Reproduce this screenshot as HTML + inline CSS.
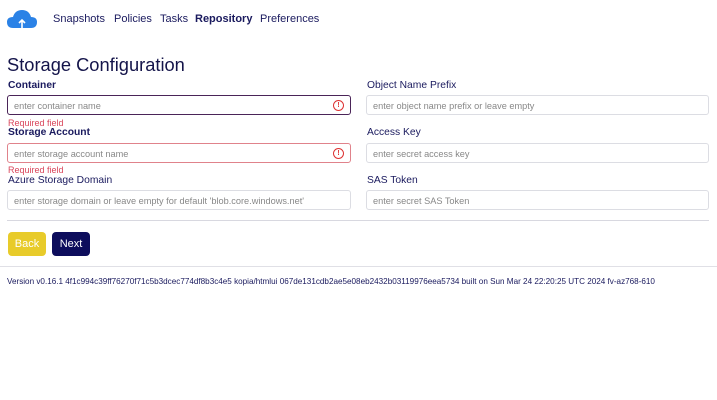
<!DOCTYPE html>
<html><head><style>
body{margin:0;width:717px;height:400px;background:#fff;font-family:"Liberation Sans",sans-serif;color:#1a1a5e;position:relative;overflow:hidden}
.a{position:absolute;white-space:nowrap}
.nav{font-size:11px;top:13px;color:#1a1a5e}
.lbl{font-size:10.3px;color:#1a1a5e}
.b{font-weight:bold}
.in{position:absolute;height:20px;border:1px solid #dcdde3;border-radius:3px;font-size:9.2px;color:#888;line-height:20px;padding-left:6px;box-sizing:border-box}
.err{border-color:#e0828b}
.req{font-size:9px;color:#d9455a}
.ic{position:absolute;right:6px;top:4px;width:9px;height:9px;border:1.2px solid #d33;border-radius:50%;font-size:7px;line-height:9px;text-align:center;color:#d33;font-weight:bold}
</style></head><body>
<svg class="a" style="left:7px;top:10px" width="30" height="19" viewBox="0 0 30 19"><path d="M6 18 Q0 18 0 12 Q0 7 6 7 Q8 0 15 0 Q22 0 24 7 Q30 7 30 12 Q30 18 24 18Z" fill="#2b82e6"/><path d="M15 18V10M12 13l3-3 3 3" stroke="#fff" stroke-width="1.6" fill="none"/></svg>
<div class="a nav" style="left:53px">Snapshots</div>
<div class="a nav" style="left:114px">Policies</div>
<div class="a nav" style="left:160px">Tasks</div>
<div class="a nav b" style="left:195px">Repository</div>
<div class="a nav" style="left:260px">Preferences</div>
<div class="a" style="left:7px;top:54px;font-size:18.3px;color:#14144a">Storage Configuration</div>
<div class="a lbl b" style="left:8px;top:80px">Container</div>
<div class="in err" style="left:7px;top:95px;width:344px;border:1.5px solid #4a2458">enter container name<span class="ic">!</span></div>
<div class="a req" style="left:8px;top:118px">Required field</div>
<div class="a lbl b" style="left:8px;top:127px">Storage Account</div>
<div class="in err" style="left:7px;top:143px;width:344px">enter storage account name<span class="ic">!</span></div>
<div class="a req" style="left:8px;top:165px">Required field</div>
<div class="a lbl" style="left:8px;top:175px">Azure Storage Domain</div>
<div class="in" style="left:7px;top:190px;width:344px">enter storage domain or leave empty for default 'blob.core.windows.net'</div>
<div class="a lbl" style="left:367px;top:80px">Object Name Prefix</div>
<div class="in" style="left:366px;top:95px;width:343px">enter object name prefix or leave empty</div>
<div class="a lbl" style="left:367px;top:127px">Access Key</div>
<div class="in" style="left:366px;top:143px;width:343px">enter secret access key</div>
<div class="a lbl" style="left:367px;top:175px">SAS Token</div>
<div class="in" style="left:366px;top:190px;width:343px">enter secret SAS Token</div>
<div class="a" style="left:7px;top:220px;width:702px;height:1px;background:#d8d8e0"></div>
<div class="a" style="left:8px;top:232px;width:38px;height:24px;background:#e8cb2a;border-radius:4px;color:#fff;font-size:11px;line-height:24px;text-align:center">Back</div>
<div class="a" style="left:52px;top:232px;width:38px;height:24px;background:#0d0d5c;border-radius:4px;color:#fff;font-size:11px;line-height:24px;text-align:center">Next</div>
<div class="a" style="left:0;top:266px;width:717px;height:1px;background:#e0e0e6"></div>
<div class="a" style="left:7px;top:277px;font-size:8.15px;color:#1a1a5e">Version v0.16.1 4f1c994c39ff76270f71c5b3dcec774df8b3c4e5 kopia/htmlui 067de131cdb2ae5e08eb2432b03119976eea5734 built on Sun Mar 24 22:20:25 UTC 2024 fv-az768-610</div>
</body></html>
